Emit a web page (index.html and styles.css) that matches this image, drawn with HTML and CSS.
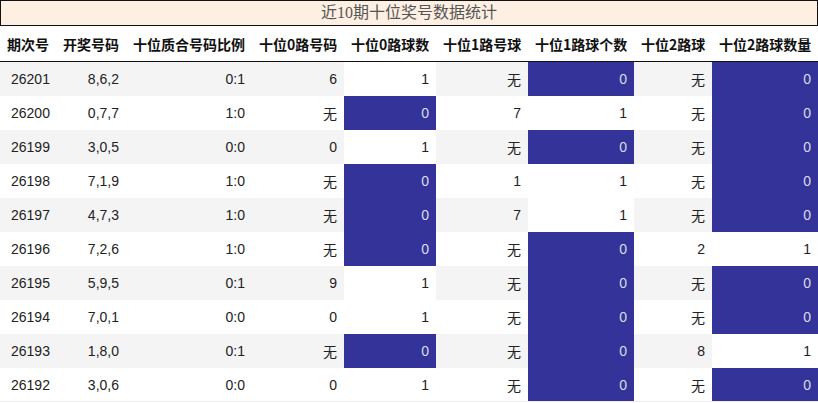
FILE: index.html
```html
<!DOCTYPE html>
<html lang="zh-CN">
<head>
<meta charset="utf-8">
<title>近10期十位奖号数据统计</title>
<link rel="stylesheet" href="styles.css">
</head>
<body>
<div class="title">近10期十位奖号数据统计</div>
<table class="stats">
  <colgroup>
    <col class="w56"><col class="w70"><col class="w126"><col class="w92"><col class="w92"><col class="w92"><col class="w106"><col class="w78"><col class="w106">
  </colgroup>
  <thead>
    <tr>
      <th>期次号</th><th>开奖号码</th><th>十位质合号码比例</th><th>十位0路号码</th><th>十位0路球数</th><th>十位1路号球</th><th>十位1路球个数</th><th>十位2路球</th><th>十位2路球数量</th>
    </tr>
  </thead>
  <tbody>
    <tr class="odd"><td>26201</td><td>8,6,2</td><td>0:1</td><td>6</td><td class="cnt">1</td><td>无</td><td class="cnt zero">0</td><td>无</td><td class="cnt zero">0</td></tr>
    <tr><td>26200</td><td>0,7,7</td><td>1:0</td><td>无</td><td class="cnt zero">0</td><td>7</td><td class="cnt">1</td><td>无</td><td class="cnt zero">0</td></tr>
    <tr class="odd"><td>26199</td><td>3,0,5</td><td>0:0</td><td>0</td><td class="cnt">1</td><td>无</td><td class="cnt zero">0</td><td>无</td><td class="cnt zero">0</td></tr>
    <tr><td>26198</td><td>7,1,9</td><td>1:0</td><td>无</td><td class="cnt zero">0</td><td>1</td><td class="cnt">1</td><td>无</td><td class="cnt zero">0</td></tr>
    <tr class="odd"><td>26197</td><td>4,7,3</td><td>1:0</td><td>无</td><td class="cnt zero">0</td><td>7</td><td class="cnt">1</td><td>无</td><td class="cnt zero">0</td></tr>
    <tr><td>26196</td><td>7,2,6</td><td>1:0</td><td>无</td><td class="cnt zero">0</td><td>无</td><td class="cnt zero">0</td><td>2</td><td class="cnt">1</td></tr>
    <tr class="odd"><td>26195</td><td>5,9,5</td><td>0:1</td><td>9</td><td class="cnt">1</td><td>无</td><td class="cnt zero">0</td><td>无</td><td class="cnt zero">0</td></tr>
    <tr><td>26194</td><td>7,0,1</td><td>0:0</td><td>0</td><td class="cnt">1</td><td>无</td><td class="cnt zero">0</td><td>无</td><td class="cnt zero">0</td></tr>
    <tr class="odd"><td>26193</td><td>1,8,0</td><td>0:1</td><td>无</td><td class="cnt zero">0</td><td>无</td><td class="cnt zero">0</td><td>8</td><td class="cnt">1</td></tr>
    <tr><td>26192</td><td>3,0,6</td><td>0:0</td><td>0</td><td class="cnt">1</td><td>无</td><td class="cnt zero">0</td><td>无</td><td class="cnt zero">0</td></tr>
  </tbody>
</table>
</body>
</html>
```
FILE: styles.css
```css
html, body {
  margin: 0;
  padding: 0;
  background: #fff;
}

.title {
  height: 24px;
  line-height: 24px;
  border: 1px solid #111;
  background: #fdf0e3;
  color: #555;
  text-align: center;
  font-family: "Liberation Serif", "Noto Sans CJK SC", serif;
  font-size: 16px;
}

.stats {
  width: 818px;
  table-layout: fixed;
  border-collapse: collapse;
  border-spacing: 0;
}

.w56 { width: 56px; }
.w70 { width: 70px; }
.w78 { width: 78px; }
.w92 { width: 92px; }
.w106 { width: 106px; }
.w126 { width: 126px; }

.stats th {
  height: 35px;
  padding: 0 7px;
  font-family: "Noto Sans CJK SC", "Noto Sans", sans-serif;
  font-weight: bold;
  font-size: 14px;
  color: #111;
  text-align: right;
  white-space: nowrap;
  border-bottom: 1px solid #111;
  background: #fff;
}

.stats th:last-child {
  border-right: 1px solid #111;
}

.stats td {
  height: 34px;
  padding: 0 7px;
  font-family: "Liberation Sans", "Noto Sans CJK SC", sans-serif;
  font-size: 14px;
  color: #222;
  text-align: right;
  white-space: nowrap;
  background: #fff;
}

.stats tr:last-child td {
  height: 33px;
  border-bottom: 1px solid #eee;
}

.stats td:first-child {
  padding-left: 11px;
  text-align: left;
}

.stats tr.odd td {
  background: #f4f4f4;
}

.stats tr td.cnt {
  background: #fff;
}

.stats tr td.zero {
  background: #333399;
  color: #dcdcec;
}
```
